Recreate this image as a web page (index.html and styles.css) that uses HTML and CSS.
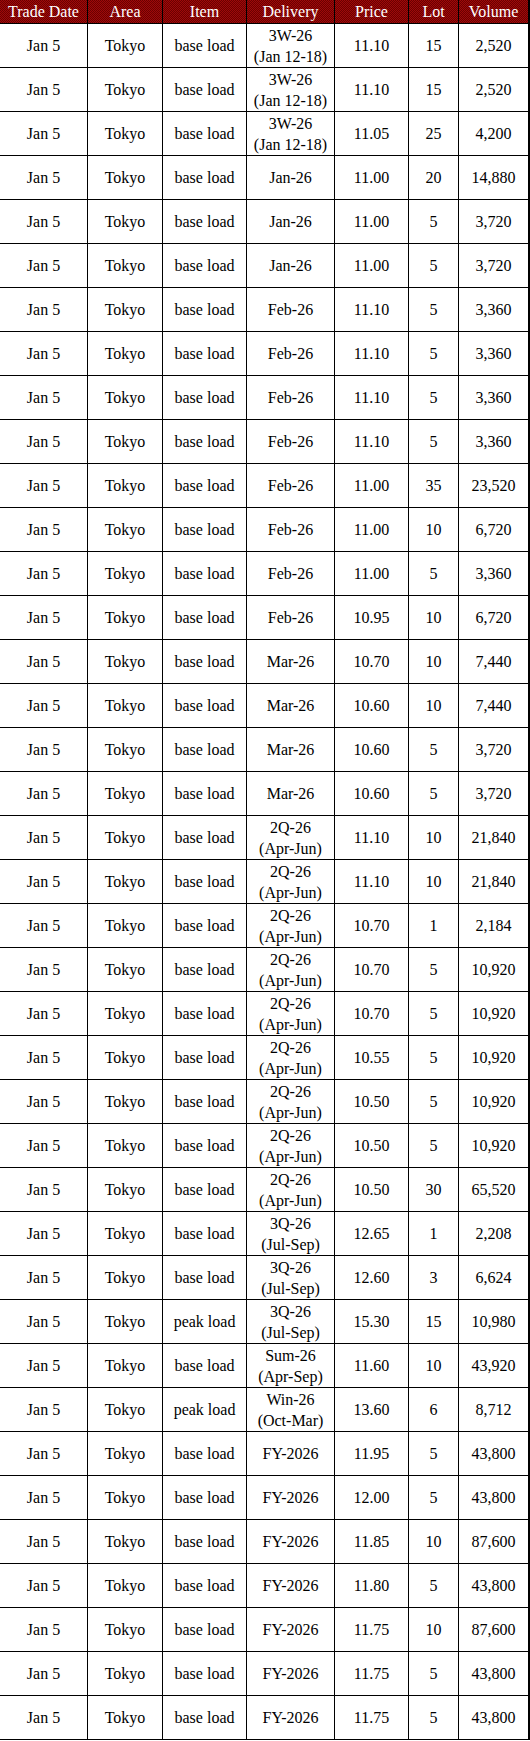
FILE: index.html
```html
<!DOCTYPE html>
<html>
<head>
<meta charset="utf-8">
<link rel="stylesheet" href="styles.css">
</head>
<body>
<table class="trades">
<colgroup>
<col class="c-date"><col class="c-area"><col class="c-item"><col class="c-del"><col class="c-price"><col class="c-lot"><col class="c-vol">
</colgroup>
<thead>
<tr class="head"><th>Trade Date</th><th>Area</th><th>Item</th><th>Delivery</th><th>Price</th><th>Lot</th><th>Volume</th></tr>
</thead>
<tbody>
<tr><td>Jan 5</td><td>Tokyo</td><td>base load</td><td>3W-26<br>(Jan 12-18)</td><td>11.10</td><td>15</td><td>2,520</td></tr>
<tr><td>Jan 5</td><td>Tokyo</td><td>base load</td><td>3W-26<br>(Jan 12-18)</td><td>11.10</td><td>15</td><td>2,520</td></tr>
<tr><td>Jan 5</td><td>Tokyo</td><td>base load</td><td>3W-26<br>(Jan 12-18)</td><td>11.05</td><td>25</td><td>4,200</td></tr>
<tr><td>Jan 5</td><td>Tokyo</td><td>base load</td><td>Jan-26</td><td>11.00</td><td>20</td><td>14,880</td></tr>
<tr><td>Jan 5</td><td>Tokyo</td><td>base load</td><td>Jan-26</td><td>11.00</td><td>5</td><td>3,720</td></tr>
<tr><td>Jan 5</td><td>Tokyo</td><td>base load</td><td>Jan-26</td><td>11.00</td><td>5</td><td>3,720</td></tr>
<tr><td>Jan 5</td><td>Tokyo</td><td>base load</td><td>Feb-26</td><td>11.10</td><td>5</td><td>3,360</td></tr>
<tr><td>Jan 5</td><td>Tokyo</td><td>base load</td><td>Feb-26</td><td>11.10</td><td>5</td><td>3,360</td></tr>
<tr><td>Jan 5</td><td>Tokyo</td><td>base load</td><td>Feb-26</td><td>11.10</td><td>5</td><td>3,360</td></tr>
<tr><td>Jan 5</td><td>Tokyo</td><td>base load</td><td>Feb-26</td><td>11.10</td><td>5</td><td>3,360</td></tr>
<tr><td>Jan 5</td><td>Tokyo</td><td>base load</td><td>Feb-26</td><td>11.00</td><td>35</td><td>23,520</td></tr>
<tr><td>Jan 5</td><td>Tokyo</td><td>base load</td><td>Feb-26</td><td>11.00</td><td>10</td><td>6,720</td></tr>
<tr><td>Jan 5</td><td>Tokyo</td><td>base load</td><td>Feb-26</td><td>11.00</td><td>5</td><td>3,360</td></tr>
<tr><td>Jan 5</td><td>Tokyo</td><td>base load</td><td>Feb-26</td><td>10.95</td><td>10</td><td>6,720</td></tr>
<tr><td>Jan 5</td><td>Tokyo</td><td>base load</td><td>Mar-26</td><td>10.70</td><td>10</td><td>7,440</td></tr>
<tr><td>Jan 5</td><td>Tokyo</td><td>base load</td><td>Mar-26</td><td>10.60</td><td>10</td><td>7,440</td></tr>
<tr><td>Jan 5</td><td>Tokyo</td><td>base load</td><td>Mar-26</td><td>10.60</td><td>5</td><td>3,720</td></tr>
<tr><td>Jan 5</td><td>Tokyo</td><td>base load</td><td>Mar-26</td><td>10.60</td><td>5</td><td>3,720</td></tr>
<tr><td>Jan 5</td><td>Tokyo</td><td>base load</td><td>2Q-26<br>(Apr-Jun)</td><td>11.10</td><td>10</td><td>21,840</td></tr>
<tr><td>Jan 5</td><td>Tokyo</td><td>base load</td><td>2Q-26<br>(Apr-Jun)</td><td>11.10</td><td>10</td><td>21,840</td></tr>
<tr><td>Jan 5</td><td>Tokyo</td><td>base load</td><td>2Q-26<br>(Apr-Jun)</td><td>10.70</td><td>1</td><td>2,184</td></tr>
<tr><td>Jan 5</td><td>Tokyo</td><td>base load</td><td>2Q-26<br>(Apr-Jun)</td><td>10.70</td><td>5</td><td>10,920</td></tr>
<tr><td>Jan 5</td><td>Tokyo</td><td>base load</td><td>2Q-26<br>(Apr-Jun)</td><td>10.70</td><td>5</td><td>10,920</td></tr>
<tr><td>Jan 5</td><td>Tokyo</td><td>base load</td><td>2Q-26<br>(Apr-Jun)</td><td>10.55</td><td>5</td><td>10,920</td></tr>
<tr><td>Jan 5</td><td>Tokyo</td><td>base load</td><td>2Q-26<br>(Apr-Jun)</td><td>10.50</td><td>5</td><td>10,920</td></tr>
<tr><td>Jan 5</td><td>Tokyo</td><td>base load</td><td>2Q-26<br>(Apr-Jun)</td><td>10.50</td><td>5</td><td>10,920</td></tr>
<tr><td>Jan 5</td><td>Tokyo</td><td>base load</td><td>2Q-26<br>(Apr-Jun)</td><td>10.50</td><td>30</td><td>65,520</td></tr>
<tr><td>Jan 5</td><td>Tokyo</td><td>base load</td><td>3Q-26<br>(Jul-Sep)</td><td>12.65</td><td>1</td><td>2,208</td></tr>
<tr><td>Jan 5</td><td>Tokyo</td><td>base load</td><td>3Q-26<br>(Jul-Sep)</td><td>12.60</td><td>3</td><td>6,624</td></tr>
<tr><td>Jan 5</td><td>Tokyo</td><td>peak load</td><td>3Q-26<br>(Jul-Sep)</td><td>15.30</td><td>15</td><td>10,980</td></tr>
<tr><td>Jan 5</td><td>Tokyo</td><td>base load</td><td>Sum-26<br>(Apr-Sep)</td><td>11.60</td><td>10</td><td>43,920</td></tr>
<tr><td>Jan 5</td><td>Tokyo</td><td>peak load</td><td>Win-26<br>(Oct-Mar)</td><td>13.60</td><td>6</td><td>8,712</td></tr>
<tr><td>Jan 5</td><td>Tokyo</td><td>base load</td><td>FY-2026</td><td>11.95</td><td>5</td><td>43,800</td></tr>
<tr><td>Jan 5</td><td>Tokyo</td><td>base load</td><td>FY-2026</td><td>12.00</td><td>5</td><td>43,800</td></tr>
<tr><td>Jan 5</td><td>Tokyo</td><td>base load</td><td>FY-2026</td><td>11.85</td><td>10</td><td>87,600</td></tr>
<tr><td>Jan 5</td><td>Tokyo</td><td>base load</td><td>FY-2026</td><td>11.80</td><td>5</td><td>43,800</td></tr>
<tr><td>Jan 5</td><td>Tokyo</td><td>base load</td><td>FY-2026</td><td>11.75</td><td>10</td><td>87,600</td></tr>
<tr><td>Jan 5</td><td>Tokyo</td><td>base load</td><td>FY-2026</td><td>11.75</td><td>5</td><td>43,800</td></tr>
<tr><td>Jan 5</td><td>Tokyo</td><td>base load</td><td>FY-2026</td><td>11.75</td><td>5</td><td>43,800</td></tr>
</tbody>
</table>
</body>
</html>
```
FILE: styles.css
```css
html, body {
  margin: 0;
  padding: 0;
  background: #ffffff;
}

.trades {
  width: 530px;
  table-layout: fixed;
  border-collapse: separate;
  border-spacing: 0;
  font-family: "Liberation Serif", "Times New Roman", serif;
  font-size: 16px;
  color: #000;
}

.c-date { width: 88px; }
.c-area { width: 75px; }
.c-item { width: 84px; }
.c-del { width: 88px; }
.c-price { width: 74px; }
.c-lot { width: 50px; }
.c-vol { width: 71px; }

.trades th,
.trades td {
  padding: 0;
  text-align: center;
  vertical-align: middle;
  border-right: 1px solid #000;
  border-bottom: 1px solid #000;
}

.trades th:last-child,
.trades td:last-child {
  border-right-width: 2px;
}

.head {
  height: 24px;
}

.trades th {
  font-weight: normal;
  color: #fff;
  line-height: 18px;
  background-color: #860303;
  background-image: repeating-conic-gradient(#9e0a0a 0 25%, #6c0000 0 50%);
  background-size: 2px 2px;
}

.trades tbody tr {
  height: 44px;
}

.trades td {
  line-height: 21px;
}
```
